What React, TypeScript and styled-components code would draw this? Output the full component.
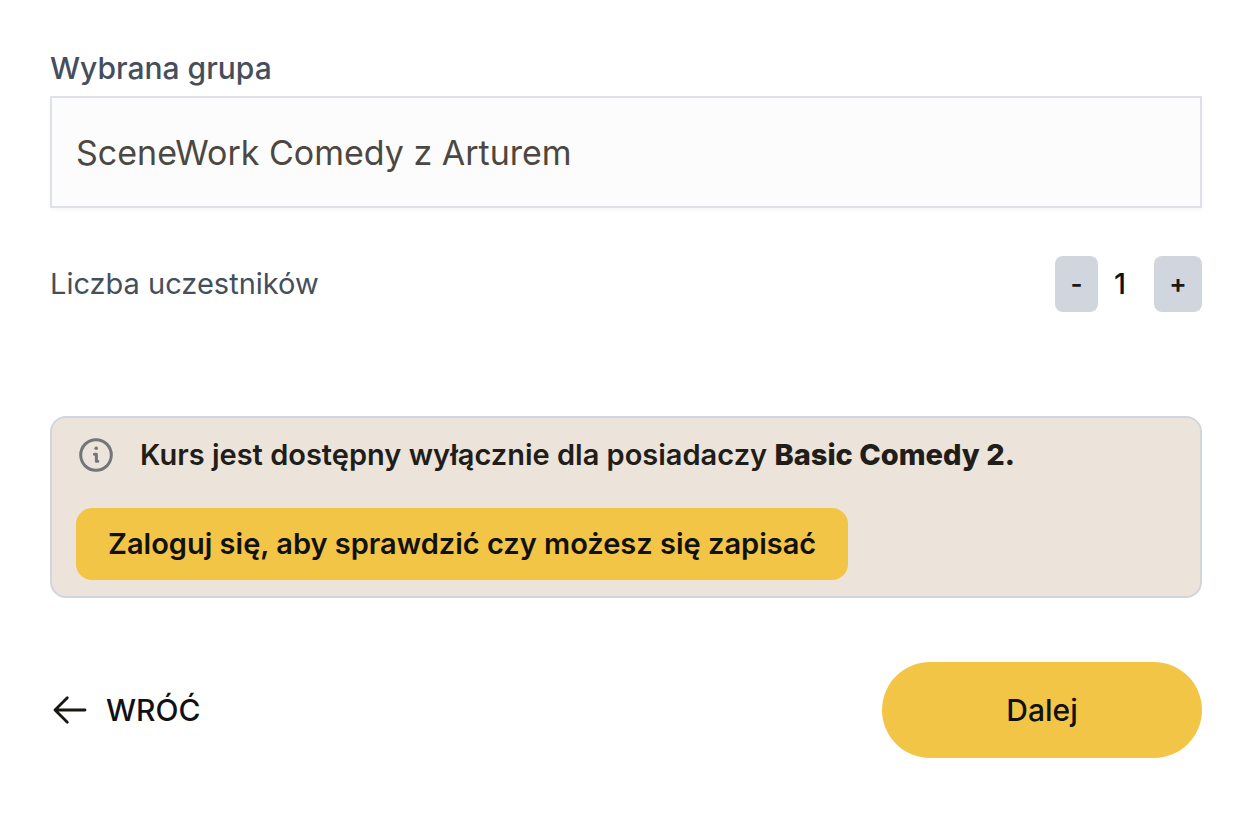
import React, { useState } from "react";
import styled, { createGlobalStyle } from "styled-components";

const GlobalStyle = createGlobalStyle`
  *, *::before, *::after { box-sizing: border-box; }
  body {
    margin: 0;
    background: #fff;
    color: #111;
    font-family: Inter, "Open Sans", sans-serif;
    font-size: 29px;
    line-height: 40px;
  }
  button, input { font: inherit; color: inherit; }
  button { border: 0; padding: 0; cursor: pointer; }
`;

const Form = styled.form`
  display: flex;
  flex-direction: column;
  padding: 48px 52px 64px 50px;
`;

const Label = styled.label`
  margin-bottom: 8px;
  color: #454e5b;
  font-size: 30px;
  font-weight: 500;
`;

const GroupInput = styled.input`
  width: 100%;
  height: 112px;
  padding: 0 24px;
  border: 2px solid #dee2e6;
  border-radius: 0;
  background: #fcfcfc;
  box-shadow: 0 2px 4px rgba(0, 0, 0, 0.04);
  color: #4c4841;
  font-size: 34px;
  outline: none;
`;

const CountRow = styled.div`
  display: flex;
  align-items: center;
  justify-content: space-between;
  margin-top: 48px;
`;

const CountLabel = styled.span`
  color: #454e5b;
`;

const Stepper = styled.div`
  display: flex;
  align-items: center;
  gap: 16px;
`;

const StepButton = styled.button<{ $width: number }>`
  width: ${(p) => p.$width}px;
  height: 56px;
  border-radius: 8px;
  background: #d1d5dd;
  color: #1c1916;
  font-size: 26px;
  font-weight: 600;
`;

const Count = styled.output`
  width: 24px;
  font-weight: 500;
`;

const Notice = styled.section`
  display: flex;
  flex-direction: column;
  align-items: flex-start;
  gap: 32px;
  margin-top: 104px;
  padding: 16px 24px;
  border: 2px solid #d1d5dd;
  border-radius: 16px;
  background: #ece3db;
`;

const NoticeMessage = styled.div`
  display: flex;
  align-items: center;
  gap: 24px;
  min-height: 42px;
  color: #211d18;
  font-weight: 600;

  svg { flex: none; }
  p { margin: 0; }
  strong { font-weight: 800; }
`;

const LoginButton = styled.button`
  min-height: 72px;
  padding: 0 32px;
  border-radius: 16px;
  background: #f2c546;
  font-weight: 600;
`;

const Footer = styled.footer`
  display: flex;
  align-items: center;
  justify-content: space-between;
  margin-top: 64px;
  font-size: 30px;
  font-weight: 500;
`;

const BackButton = styled.button`
  display: flex;
  align-items: center;
  gap: 16px;
  background: none;
`;

const NextButton = styled.button`
  width: 320px;
  height: 96px;
  border-radius: 48px;
  background: #f2c546;
`;

const InfoIcon = () => (
  <svg width="40" height="40" viewBox="0 0 40 40" fill="none" stroke="#73757a" strokeWidth="3" strokeLinecap="round" strokeLinejoin="round" aria-hidden="true">
    <circle cx="20" cy="20" r="15.3" />
    <path d="M18.4 19.2H20.4v7h1.4" />
    <circle cx="20.2" cy="13.2" r="1.8" fill="#73757a" stroke="none" />
  </svg>
);

const ArrowIcon = () => (
  <svg width="40" height="40" viewBox="0 0 40 40" fill="none" stroke="#151711" strokeWidth="2.8" strokeLinecap="round" strokeLinejoin="round" aria-hidden="true">
    <path d="M17.3 7.7 5 20l12.3 12.3M5 20h30" />
  </svg>
);

export default function App() {
  const [count, setCount] = useState(1);

  return (
    <>
      <GlobalStyle />
      <Form onSubmit={(e) => e.preventDefault()}>
        <Label htmlFor="group">Wybrana grupa</Label>
        <GroupInput id="group" readOnly value="SceneWork Comedy z Arturem" />

        <CountRow>
          <CountLabel id="count-label">Liczba uczestników</CountLabel>
          <Stepper role="group" aria-labelledby="count-label">
            <StepButton type="button" $width={43} onClick={() => setCount(Math.max(1, count - 1))}>
              -
            </StepButton>
            <Count>{count}</Count>
            <StepButton type="button" $width={48} onClick={() => setCount(count + 1)}>
              +
            </StepButton>
          </Stepper>
        </CountRow>

        <Notice>
          <NoticeMessage>
            <InfoIcon />
            <p>
              Kurs jest dostępny wyłącznie dla posiadaczy <strong>Basic Comedy 2.</strong>
            </p>
          </NoticeMessage>
          <LoginButton type="button">Zaloguj się, aby sprawdzić czy możesz się zapisać</LoginButton>
        </Notice>

        <Footer>
          <BackButton type="button">
            <ArrowIcon />
            WRÓĆ
          </BackButton>
          <NextButton type="submit">Dalej</NextButton>
        </Footer>
      </Form>
    </>
  );
}
